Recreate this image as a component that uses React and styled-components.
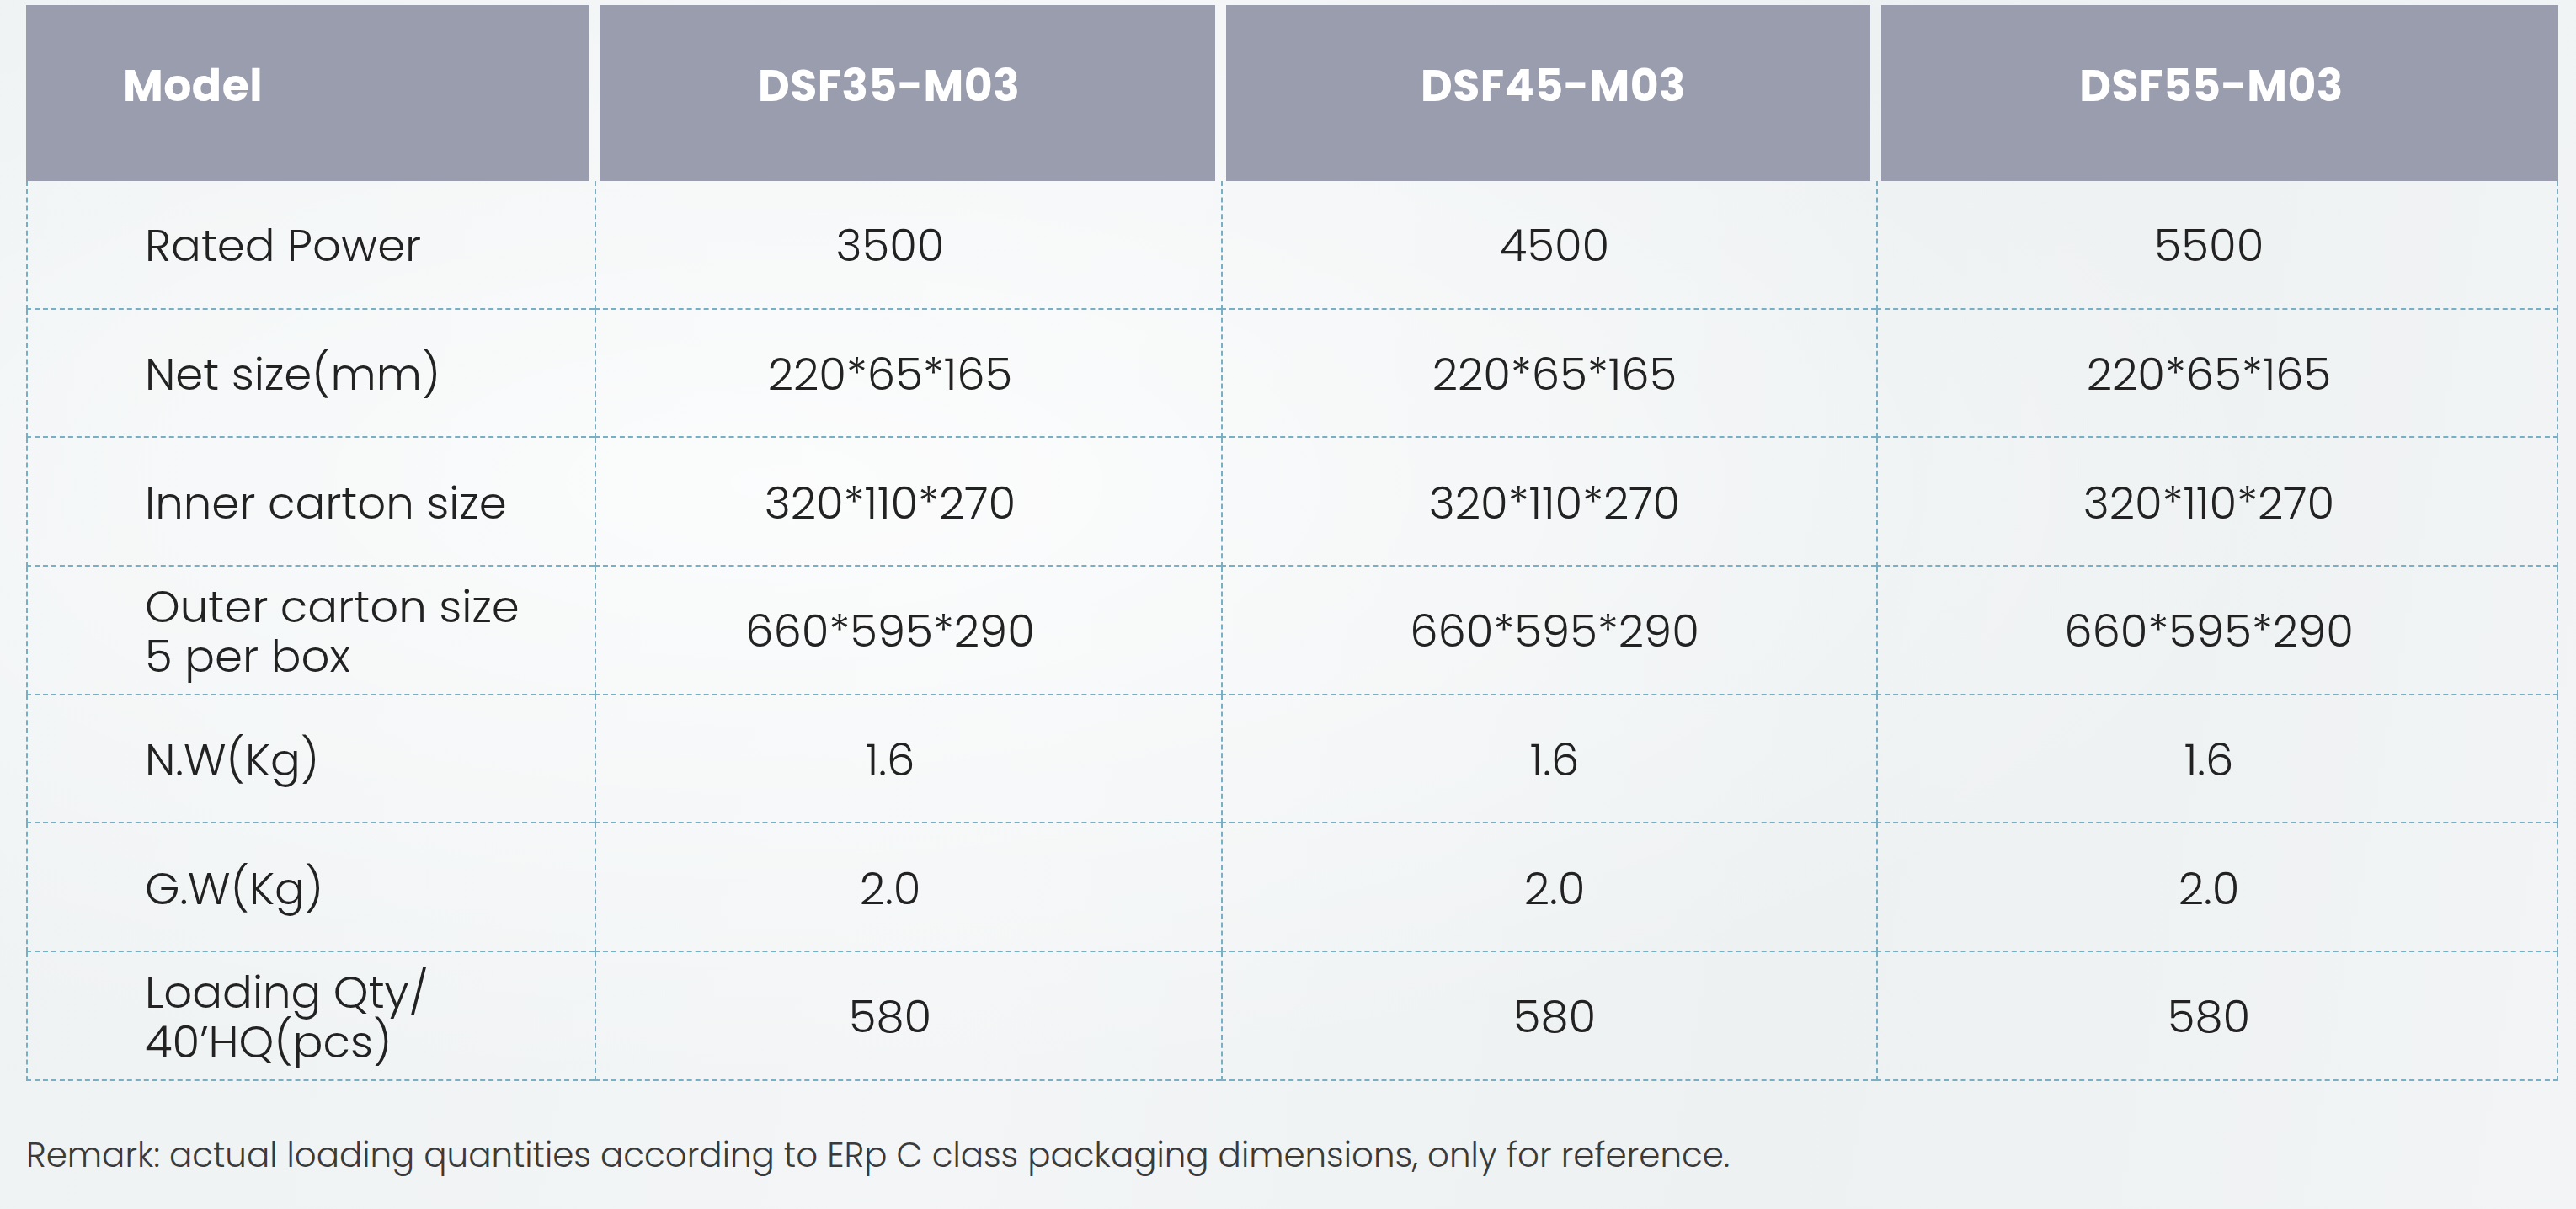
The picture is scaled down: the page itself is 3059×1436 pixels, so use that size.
import React from 'react';
import styled, { createGlobalStyle } from 'styled-components';

// 제품 사양 표 (패키징 정보)

const GlobalStyle = createGlobalStyle`
  html, body {
    margin: 0;
    padding: 0;
  }
  body {
    font-family: "Poppins", "Open Sans", "Liberation Sans", sans-serif;
    color: #262626;
    background: #f1f4f5;
  }
`;

const Page = styled.div`
  width: 3059px;
  height: 1436px;
  box-sizing: border-box;
  padding: 6px 21px 0 31px;
  background:
    radial-gradient(ellipse at 30% 40%, rgba(255,255,255,0.7), rgba(255,255,255,0) 60%),
    linear-gradient(100deg, #eef2f3 0%, #f3f5f6 40%, #edf1f2 70%, #f2f4f5 100%);
  overflow: hidden;
`;

const Table = styled.div`
  display: grid;
  grid-template-columns: 675px 744px 778px 810px;
  grid-template-rows: 209px repeat(7, 152.7px);
  width: 3007px;
`;

// 컬럼별 텍스트 중앙 보정
const shiftPad = (s = 0) => `
  padding-left: ${s > 0 ? s * 2 : 0}px;
  padding-right: ${s < 0 ? -s * 2 : 0}px;
`;

const HeadCell = styled.div`
  box-sizing: border-box;
  background: #9a9dae;
  color: #ffffff;
  font-weight: 700;
  font-size: 52px;
  display: flex;
  align-items: center;
  justify-content: ${(p) => (p.$left ? 'flex-start' : 'center')};
  ${(p) => (p.$left ? 'padding-left: 115px;' : shiftPad(p.$shift))}
  padding-bottom: 18px;
  margin-left: ${(p) => (p.$first ? '0' : '6px')};
  margin-right: ${(p) => (p.$last ? '0' : '7px')};
  letter-spacing: 0.5px;
`;

const Cell = styled.div`
  box-sizing: border-box;
  border-left: 2px dashed #78afc4;
  border-bottom: 2px dashed #78afc4;
  border-right: ${(p) => (p.$last ? '2px dashed #78afc4' : 'none')};
  display: flex;
  align-items: center;
  justify-content: ${(p) => (p.$left ? 'flex-start' : 'center')};
  ${(p) => (p.$left ? 'padding-left: 139px;' : shiftPad(p.$shift))}
  padding-top: 3px;
  font-weight: 300;
  font-size: 53px;
  line-height: 1.12;
  color: #222;
`;

const Label = styled.p`
  margin: 0;
`;

const Remark = styled.div`
  margin-top: 58px;
  font-weight: 300;
  font-size: 40.4px;
  color: #3a3a3a;
`;

const models = ['DSF35-M03', 'DSF45-M03', 'DSF55-M03'];
const shifts = [-22, 6, -10];

const rows = [
  { label: ['Rated Power'], values: ['3500', '4500', '5500'] },
  { label: ['Net size(mm)'], values: ['220*65*165', '220*65*165', '220*65*165'] },
  { label: ['Inner carton size'], values: ['320*110*270', '320*110*270', '320*110*270'] },
  { label: ['Outer carton size', '5 per box'], values: ['660*595*290', '660*595*290', '660*595*290'] },
  { label: ['N.W(Kg)'], values: ['1.6', '1.6', '1.6'] },
  { label: ['G.W(Kg)'], values: ['2.0', '2.0', '2.0'] },
  { label: ['Loading Qty/', '40\u2019HQ(pcs)'], values: ['580', '580', '580'] },
];

const App = () => {
  return (
    <>
      <GlobalStyle />
      <Page>
        <Table>
          <HeadCell $left $first>Model</HeadCell>
          {models.map((m, i) => (
            <HeadCell key={m} $shift={shifts[i]} $last={i === models.length - 1}>{m}</HeadCell>
          ))}

          {rows.map((r) => (
            <React.Fragment key={r.label[0]}>
              <Cell $left>
                <Label>
                  {r.label.map((l, j) => (
                    <React.Fragment key={l}>
                      {j > 0 && <br />}
                      {l}
                    </React.Fragment>
                  ))}
                </Label>
              </Cell>
              {r.values.map((v, i) => (
                <Cell key={i} $shift={shifts[i]} $last={i === r.values.length - 1}>{v}</Cell>
              ))}
            </React.Fragment>
          ))}
        </Table>

        <Remark>
          Remark: actual loading quantities according to ERp C class packaging dimensions, only for reference.
        </Remark>
      </Page>
    </>
  );
};

export default App;
